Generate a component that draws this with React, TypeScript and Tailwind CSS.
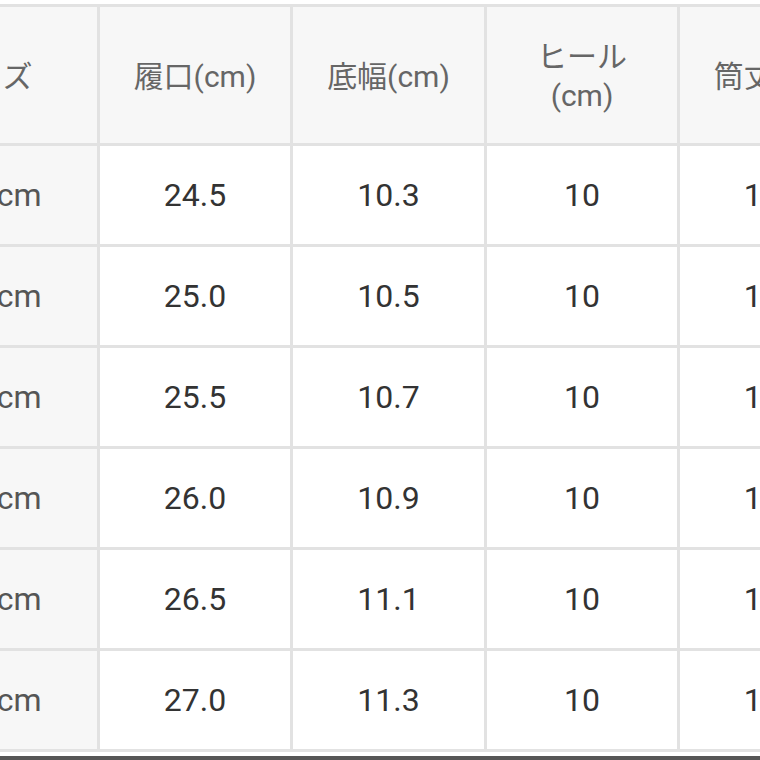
const headers: string[][] = [
  ['サイズ'],
  ['履口(cm)'],
  ['底幅(cm)'],
  ['ヒール', '(cm)'],
  ['筒丈(cm)'],
];

const rows: string[][] = [
  ['22.5cm', '24.5', '10.3', '10', '17.5'],
  ['23.0cm', '25.0', '10.5', '10', '17.5'],
  ['23.5cm', '25.5', '10.7', '10', '17.5'],
  ['24.0cm', '26.0', '10.9', '10', '17.5'],
  ['24.5cm', '26.5', '11.1', '10', '17.5'],
  ['25.0cm', '27.0', '11.3', '10', '17.5'],
];

export default function App() {
  return (
    <div className="w-[760px] h-[760px] overflow-hidden bg-white flex flex-col font-['Roboto','Noto_Sans_CJK_JP',sans-serif]">
      <div className="mt-[4px] ml-[-124px] w-max p-[3px] bg-[#e2e2e2] grid grid-cols-[218px_190px_191px_190px_190px] gap-[3px]">
        {headers.map((h, i) => (
          <div
            key={i}
            className="h-[136px] pt-[2px] bg-[#f7f7f7] flex flex-col items-center justify-center text-[30px] leading-[39px] text-[#666]"
          >
            {h.map((line, j) => (
              <span key={j}>{line}</span>
            ))}
          </div>
        ))}
        {rows.map((r, ri) =>
          r.map((v, ci) => (
            <div
              key={ri + '-' + ci}
              className={
                ci === 0
                  ? 'h-[98px] bg-[#f7f7f7] flex items-center justify-center text-[32px] text-[#555]'
                  : 'h-[98px] bg-white flex items-center justify-center text-[32px] text-[#333]'
              }
            >
              {v}
            </div>
          ))
        )}
      </div>
      <div className="flex-1" />
      <div className="h-[4px] bg-[#555]" />
    </div>
  );
}
